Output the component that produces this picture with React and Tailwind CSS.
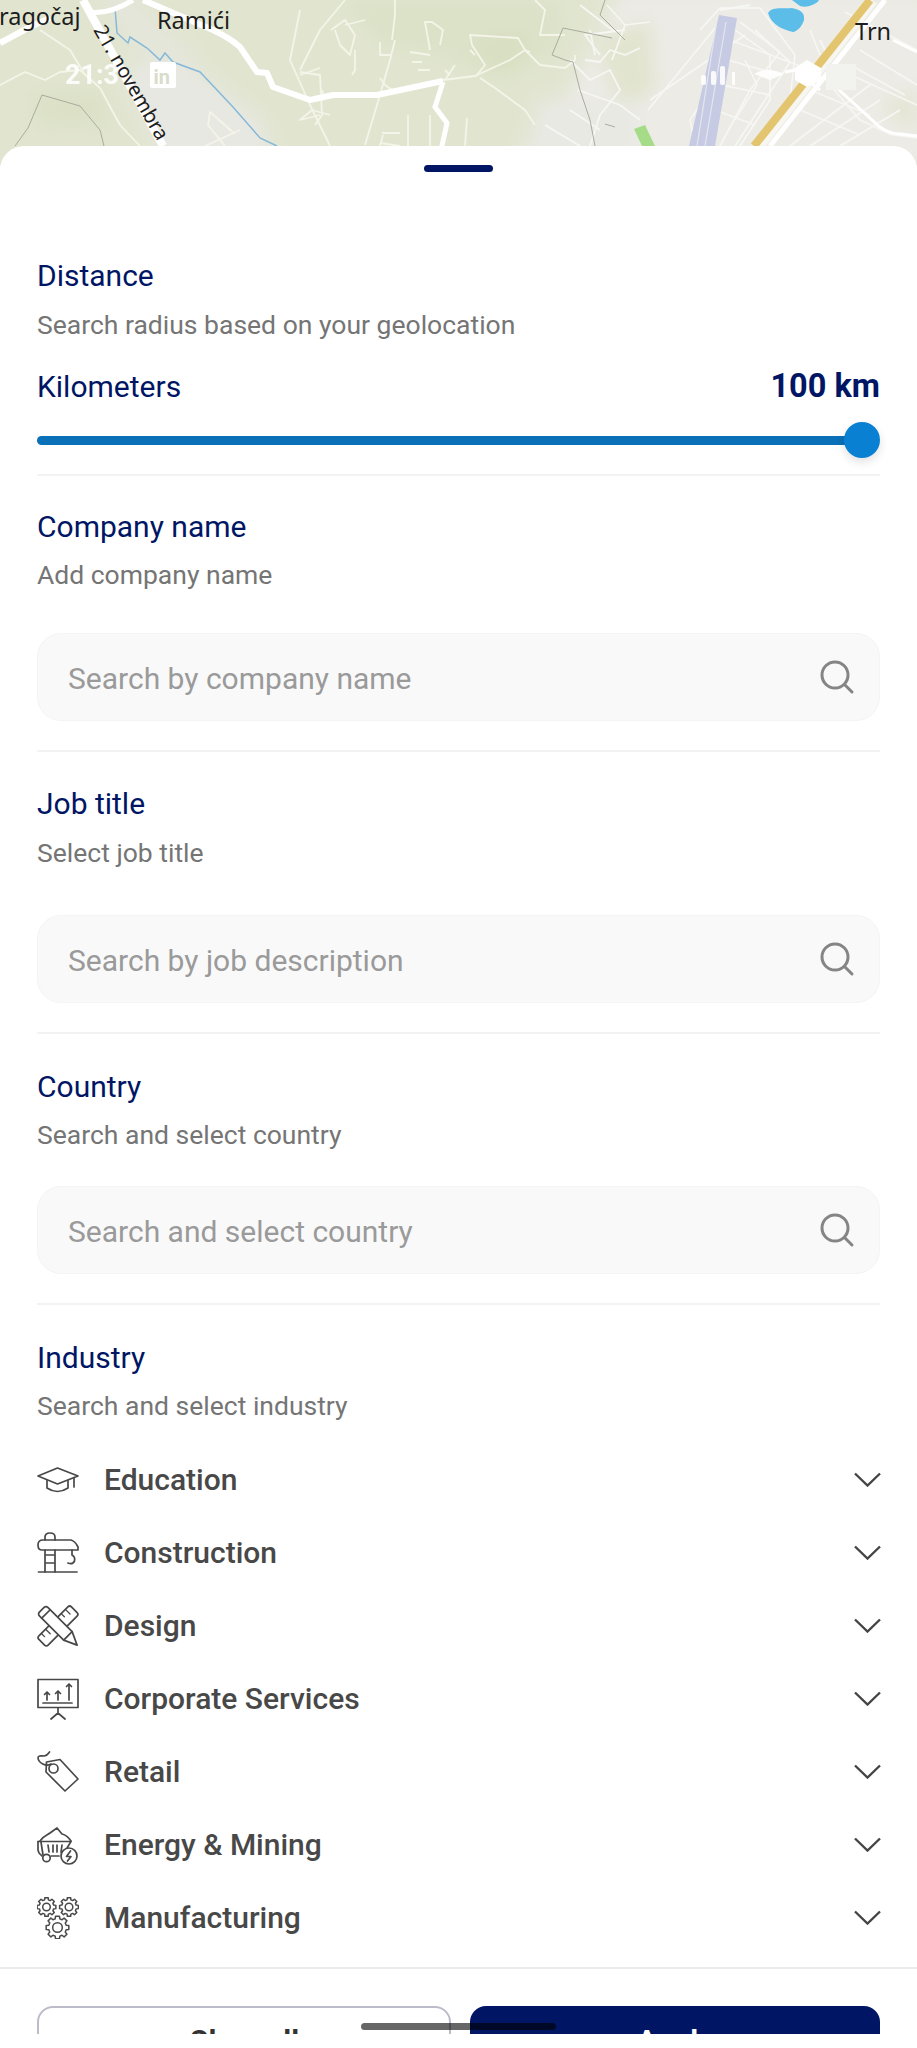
import React from "react";

const thinRoads = [
  "M0 85L25 72L45 80L60 72L80 70L100 88L120 125L140 146",
  "M40 30L70 50L85 75",
  "M225 146L208 125L210 112L235 134",
  "M205 146L240 130",
  "M300 10L290 60L310 105L330 146",
  "M345 0L320 30L300 70",
  "M331 30L345 20L355 35L350 55L340 45L335 30",
  "M345 25L365 20",
  "M355 50L355 70L352 75",
  "M365 145L380 95L390 60L395 40",
  "M320 68L300 75",
  "M300 72L320 75L322 115L315 125",
  "M322 90L325 100",
  "M380 78L385 85L395 92",
  "M395 0L395 15L392 40",
  "M380 42L380 55L392 55",
  "M430 50L425 22L432 22L443 30L440 45",
  "M410 52L430 55M412 62L422 62M418 70L430 70",
  "M445 70L450 75M455 65L445 80",
  "M443 80L475 76L510 60L525 50L530 52",
  "M525 50L518 38L470 35L472 45L485 65L476 76",
  "M470 50L475 55",
  "M480 78L495 88L525 110L535 125",
  "M525 50L540 65L565 68L575 60L575 55",
  "M565 35L540 35L545 10L535 0",
  "M383 135L380 146M382 133L400 133M380 143L400 146",
  "M408 115L408 146M430 115L430 146",
  "M467 118L465 146",
  "M320 115L300 120L312 110L330 115",
];
const townRoads = [
  "M570 60L590 80L610 70L620 90L600 115L590 146",
  "M585 60L600 62L610 50L625 55L640 48",
  "M578 90L620 105L640 120M570 110L600 130",
  "M545 125L580 146M600 55L585 35L625 30",
  "M615 32L580 5M612 60L625 25M590 30L595 55",
  "M648 110L720 22M650 100L745 35",
  "M740 22L780 52L750 90L720 146M755 30L790 62L765 100L735 146",
  "M730 40L800 66M728 60L780 75M722 85L770 95M715 110L755 125",
  "M696 146L690 120L700 105M750 5L720 10",
];
const cityRoads = [
  "M830 85L860 120L890 134L917 138",
  "M845 12L917 50",
  "M790 146L870 85M810 146L880 100M840 146L900 110",
  "M800 110L860 135M815 92L870 115M840 70L917 105",
  "M860 50L917 85M850 65L905 95",
  "M820 40L830 60M810 30L820 55",
];

function Map() {
  return (
    <svg viewBox="0 0 917 166" className="block w-[917px] h-[166px]">
      <defs>
        <filter id="soft" x="-20%" y="-20%" width="140%" height="140%">
          <feGaussianBlur stdDeviation="9" />
        </filter>
        <filter id="tiny" x="-5%" y="-5%" width="110%" height="110%">
          <feGaussianBlur stdDeviation="0.5" />
        </filter>
      </defs>
      <rect width="917" height="166" fill="#e1e5d0" />
      <g filter="url(#soft)">
        <path d="M340 0H560V50L500 80L440 55L380 45Z" fill="#dce2c8" />
        <path d="M125 70L175 55L260 120L280 176H170Z" fill="#e8e8e3" />
        <path d="M100 -10H125L200 60L170 70L130 45Z" fill="#e4e6da" />
        <path d="M30 95L100 90L110 125L40 125Z" fill="#dbe0c6" />
        <path d="M470 40L530 30L520 70L490 75Z" fill="#d9dfc2" />
        <path d="M620 -10H930V176H500L560 110L590 50Z" fill="#ecebe6" />
        <path d="M595 40L650 20L655 90L620 110Z" fill="#e1e4ce" />
        <path d="M885 100L917 90V130L890 120Z" fill="#e4e5d4" />
        <path d="M540 100H640V176H520Z" fill="#e9e9e4" />
      </g>

      <g filter="url(#tiny)">
        <g fill="none" stroke="#f4f4e8" strokeWidth="1.800" strokeLinejoin="round">
          {thinRoads.map((d, i) => <path key={i} d={d} />)}
        </g>
        <g fill="none" stroke="#f6f6f3" strokeWidth="1.800" strokeLinejoin="round">
          {townRoads.map((d, i) => <path key={i} d={d} />)}
          {cityRoads.map((d, i) => <path key={i} d={d} />)}
        </g>
        <g fill="none" stroke="#f8f8f6" strokeWidth="1.400">
          <path d="M700 30L720 8H760L795 55L790 100L760 146" />
          <path d="M735 30L770 55L770 100L740 146" />
          <path d="M745 60L757 85L735 120" />
        </g>
        <g fill="none" stroke="#a3a597" strokeWidth="0.900">
          <path d="M15 146L28 128L42 95L80 106L100 130L104 146" />
          <path d="M605 0L600 15L625 40" />
          <path d="M563 28L552 55L565 60L573 62L580 90L590 120L595 146" />
          <path d="M563 28L612 38" />
          <path d="M605 124L615 127" />
        </g>
        <path d="M607 5L625 25L650 22" fill="none" stroke="#f7f7f2" strokeWidth="1.500" />

        <path d="M115 8L117 33L128 43L130 37L147 48L160 60L165 53L173 62L200 72L233 107L260 138L277 146" fill="none" stroke="#86b9d9" strokeWidth="1.500" />

        <path d="M0 43L30 27L50 18" fill="none" stroke="#fff" strokeWidth="6" />
        <path d="M83 0L163 146" fill="none" stroke="#fff" strokeWidth="8" />
        <path d="M90 12C105 14 120 8 133 0" fill="none" stroke="#fff" strokeWidth="5" />
        <path d="M143 0L213 30Q230 38 240 47L257 72L267 73L273 87L310 100L333 95H377L443 81" fill="none" stroke="#fff" strokeWidth="6" strokeLinejoin="round" />
        <path d="M443 82L435 107L447 123L441 150" fill="none" stroke="#fff" strokeWidth="5" />

        <path d="M719 15L737 18L715 146H689Z" fill="#c6cbe3" />
        <path d="M716 26L697 146M726 22L705 146" stroke="#e4e6ef" strokeWidth="1.200" fill="none" />
        <path d="M634 129L645 125L655 146H642Z" fill="#a6dc87" />
        <path d="M768 13C772 6 782 9 792 8C800 10 805 12 804 20C802 26 798 31 793 32C785 30 772 26 768 13Z" fill="#5bbde9" />
        <path d="M792 0H819C816 5 806 8 800 6Z" fill="#5bbde9" />
        <path d="M872 0L758 146" fill="none" stroke="#f7f6f0" strokeWidth="12" />
        <path d="M870 0L754 146" fill="none" stroke="#e3c570" strokeWidth="8" />
        <path d="M885 0L770 146" fill="none" stroke="#fff" strokeWidth="5" />
        <path d="M826 78L872 120Q885 134 900 134L917 136" fill="none" stroke="#fff" strokeWidth="3" />
        <path d="M893 40L917 52" fill="none" stroke="#fff" strokeWidth="3" />
        <path d="M785 72L795 70L820 90" fill="none" stroke="#fff" strokeWidth="3" />
        <rect x="826" y="64" width="30" height="26" fill="#f2f2ee" />
      </g>

      <g fill="#1d1d1d" style={{ fontFamily: "'Noto Sans', sans-serif" }} fontSize="23.500">
        <text x="-1" y="25">ragočaj</text>
        <text x="157" y="29">Ramići</text>
        <text x="855" y="40">Trn</text>
        <text x="0" y="0" transform="translate(93 30) rotate(60)" fontSize="20">21. novembra</text>
      </g>

      <g fill="#fff" style={{ fontFamily: "Roboto, sans-serif" }}>
        <text x="65" y="84" fontSize="27" fontWeight="700" opacity="0.9">21:3</text>
        <rect x="150" y="62" width="26" height="26" rx="2" />
      </g>
      <g fill="#d9dccb" style={{ fontFamily: "Roboto, sans-serif" }}>
        <text x="153.500" y="84" fontSize="20" fontWeight="700">in</text>
      </g>
      <g fill="#fff" opacity="0.9">
        <rect x="701" y="75" width="5" height="10" rx="2" />
        <rect x="711" y="71" width="5" height="14" rx="2" />
        <rect x="720" y="66" width="5" height="19" rx="2" />
        <rect x="732" y="72" width="3" height="13" rx="1" />
        <path d="M754 74Q768 66 784 74L770 80Z" />
      </g>
      <path d="M795 68L807 60L821 68V80L807 87L795 80Z" fill="#fff" />
    </svg>
  );
}

const Stroke = ({ children }) => (
  <svg viewBox="0 0 42 42" className="w-[42px] h-[42px] shrink-0" fill="none" stroke="#484848" strokeWidth="1.700" strokeLinecap="round" strokeLinejoin="round">
    {children}
  </svg>
);

const Cap = () => (
  <Stroke>
    <path d="M1 17L20.500 9L41 17L20.500 25Z" />
    <path d="M10 21.500V29Q20.500 36 31 29V21.500" />
    <path d="M37 18.500V28" />
  </Stroke>
);
const Crane = () => (
  <Stroke>
    <path d="M1.500 40H40" />
    <path d="M8 18V40M18 18V40M8 23H18M8 31H18" />
    <path d="M8 8V5Q8 1 13 1Q18 1 18 5V8" />
    <path d="M6 8H34Q38 9 41 15V18H5Q1 18 1 13Q1 8 6 8Z" />
    <path d="M35 18V23Q38.500 25 37.500 29Q35.500 33 31 31" />
  </Stroke>
);
const Pencil = () => (
  <Stroke>
    <g transform="rotate(-45 21 21)">
      <rect x="-2" y="14.500" width="46" height="13" rx="2.500" />
      <path d="M4 14.500V19M10 14.500V21M16 14.500V19M32 14.500V19M38 14.500V21" strokeWidth="1.300" />
    </g>
    <g transform="rotate(45 21 21)">
      <path d="M1 15H35L48 21L35 27H1Q-2 27 -2 24V18Q-2 15 1 15Z" fill="#fff" />
      <path d="M4 15V27M35 15V27" />
    </g>
  </Stroke>
);
const Board = () => (
  <Stroke>
    <rect x="1" y="1.500" width="40" height="28" />
    <path d="M6 25H35" />
    <path d="M10 22V14M7.500 16.500L10 14L12.500 16.500M21 22V13M18.500 15.500L21 13L23.500 15.500M32 22V6M29.500 8.500L32 6L34.500 8.500" />
    <path d="M21 30V35M14 41L21 35L28 41" />
  </Stroke>
);
const Tag = () => (
  <Stroke>
    <path d="M9.500 11L23 8.500L41 28L28 40L9 21Z" />
    <circle cx="16.500" cy="17.500" r="4.500" />
    <path d="M14 13C9 16 1.500 12 1 7C1 4 5 5 7 5C10 5 11 3 12.500 1" />
  </Stroke>
);
const Cart = () => (
  <Stroke>
    <path d="M3 17C6 12 10 11 13 9L20 4L25 10C29 11 32 14 34 17" />
    <path d="M1 17.500H34L30 24" />
    <path d="M1 17.500V26L2 29L5 32M14 32H22" />
    <path d="M4 18L6 31" />
    <path d="M11 21L12 28M16 21V28M20 21V28M25 21L24 28" />
    <circle cx="9.500" cy="34" r="3.700" />
    <circle cx="32" cy="32" r="8" />
    <path d="M33.500 27L29.500 32.500H34L30.500 37" />
  </Stroke>
);

function gear(cx, cy, r, teeth) {
  const pts = [];
  const rIn = r * 0.78;
  const step = (Math.PI * 2) / teeth;
  for (let i = 0; i < teeth; i++) {
    const a = i * step;
    const w = step * 0.22;
    [[rIn, a - w * 1.5], [r, a - w], [r, a + w], [rIn, a + w * 1.5]].forEach(([R, t]) =>
      pts.push(`${(cx + R * Math.cos(t)).toFixed(2)} ${(cy + R * Math.sin(t)).toFixed(2)}`)
    );
  }
  return "M" + pts.join("L") + "Z";
}
const Gears = () => (
  <Stroke>
    <path d={gear(9.500, 10, 9.500, 8)} strokeWidth="1.500" />
    <circle cx="9.500" cy="10" r="3.800" strokeWidth="1.500" />
    <path d={gear(32, 10, 9.500, 8)} strokeWidth="1.500" />
    <circle cx="32" cy="10" r="3.800" strokeWidth="1.500" />
    <path d={gear(20.500, 30.500, 11.500, 8)} strokeWidth="1.500" />
    <circle cx="20.500" cy="30.500" r="4.800" strokeWidth="1.500" />
  </Stroke>
);

const Divider = ({ className }) => <div className={`h-[2px] bg-[#f3f3f4] ${className}`} />;

const Title = ({ children, className }) => (
  <div className={`h-[40px] leading-[40px] text-[30px] text-[#001665] ${className}`}>{children}</div>
);
const Sub = ({ children, className }) => (
  <div className={`h-[36px] leading-[36px] text-[26.500px] text-[#757575] ${className}`}>{children}</div>
);

const Search = ({ placeholder, className }) => (
  <div className={`h-[88px] rounded-[24px] bg-[#f9f9f9] border border-[#f4f4f4] pl-[30px] pr-[24px] flex items-center justify-between ${className}`}>
    <span className="pt-[2px] text-[30px] text-[#9a9a9a]">{placeholder}</span>
    <svg viewBox="0 0 36 36" className="w-[36px] h-[36px]" fill="none" stroke="#858585" strokeWidth="3" strokeLinecap="round">
      <circle cx="16" cy="16" r="13" />
      <path d="M26 26L33 33" />
    </svg>
  </div>
);

const industries = [
  ["Education", Cap],
  ["Construction", Crane],
  ["Design", Pencil],
  ["Corporate Services", Board],
  ["Retail", Tag],
  ["Energy & Mining", Cart],
  ["Manufacturing", Gears],
];

export default function App() {
  return (
    <div className="relative h-[2048px] w-[917px] overflow-hidden bg-white [font-family:Roboto,sans-serif]">
      <Map />
      <div className="-mt-[20px] relative rounded-t-[24px] bg-white pt-[19px]">
        <div className="mx-auto h-[7px] w-[69px] rounded-full bg-[#001665]" />
        <div className="px-[37px]">
          <Title className="mt-[84px]">Distance</Title>
          <Sub className="mt-[11px]">Search radius based on your geolocation</Sub>
          <div className="mt-[23px] flex h-[40px] items-center justify-between">
            <span className="text-[30px] text-[#001665]">Kilometers</span>
            <span className="text-[32.500px] font-bold text-[#001665]">100 km</span>
          </div>
          <div className="mt-[16px] flex h-[36px] items-center">
            <div className="h-[9px] flex-1 -mr-[4px] rounded-l-full bg-[#0a70b7]" />
            <div className="relative h-[36px] w-[36px] rounded-full bg-[#0a80d2] shadow-[0_4px_10px_rgba(0,0,0,0.12)]" />
          </div>
          <Divider className="mt-[16px]" />

          <Title className="mt-[31px]">Company name</Title>
          <Sub className="mt-[10px]">Add company name</Sub>
          <Search placeholder="Search by company name" className="mt-[40px]" />
          <Divider className="mt-[29px]" />

          <Title className="mt-[32px]">Job title</Title>
          <Sub className="mt-[11px]">Select job title</Sub>
          <Search placeholder="Search by job description" className="mt-[44px]" />
          <Divider className="mt-[29px]" />

          <Title className="mt-[33px]">Country</Title>
          <Sub className="mt-[10px]">Search and select country</Sub>
          <Search placeholder="Search and select country" className="mt-[33px]" />
          <Divider className="mt-[29px]" />

          <Title className="mt-[33px]">Industry</Title>
          <Sub className="mt-[10px]">Search and select industry</Sub>
          <div className="mt-[19px]">
            {industries.map(([label, Icon]) => (
              <div key={label} className="flex h-[73px] items-center">
                <Icon />
                <span className="ml-[25px] flex-1 text-[30px] font-medium text-[#484848]">{label}</span>
                <svg viewBox="0 0 27 15" className="w-[27px] h-[15px] -mr-[1px]" fill="none" stroke="#444444" strokeWidth="2.400">
                  <path d="M1 1.500L13.500 13.500L26 1.500" />
                </svg>
              </div>
            ))}
          </div>
        </div>
        <div className="mt-[13px] h-[2px] bg-[#ececee]" />
        <div className="mt-[37px] flex h-[28px] gap-[19px] overflow-hidden px-[37px]">
          <div className="h-[66px] flex-1 rounded-[16px] border-2 border-[#bcbbc9] pt-[13px] text-center text-[30px] font-bold leading-[40px] text-[#333333]">Clear all</div>
          <div className="h-[66px] flex-1 rounded-[16px] bg-[#001665] pt-[15px] text-center text-[30px] font-bold leading-[40px] text-white">Apply</div>
        </div>
      </div>
      <div className="absolute left-[361px] top-[2023px] h-[7px] w-[195px] rounded-full bg-black/60" />
    </div>
  );
}
